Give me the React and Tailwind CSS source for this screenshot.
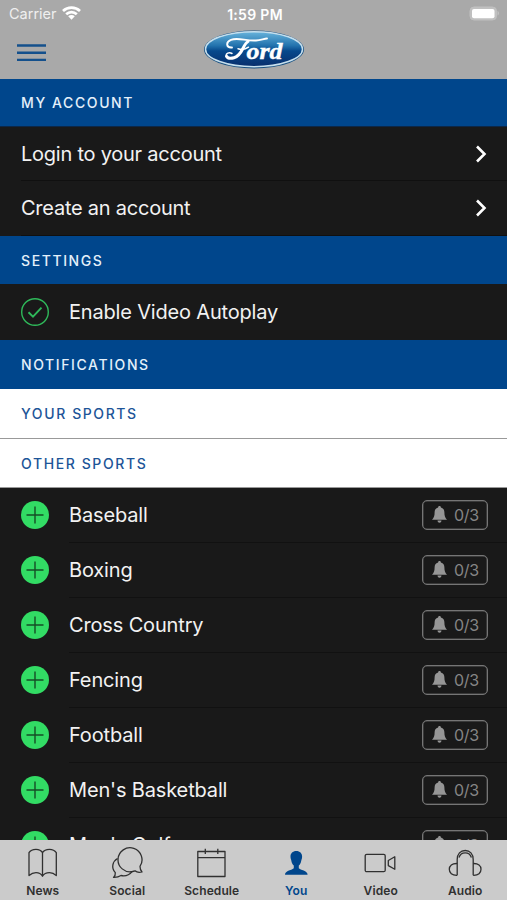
import React from 'react';

const sports = ['Baseball', 'Boxing', 'Cross Country', 'Fencing', 'Football', "Men's Basketball", "Men's Golf"];

const NewsIcon = () => (
    <path d="M17.500 5.600C16 3 13.500 2.300 11 2.300S5.600 3 4 5.600V28.600C6 26.800 8 25.600 11 25.600S16 26.600 17.500 29.200C19 26.600 21.500 25.600 24.500 25.600S29.500 26.800 31.300 28.600V5.600C29.500 3 27 2.300 24.500 2.300S19 3 17.500 5.600V29" />
);

const SocialIcon = () => (
    <>
        <path d="M22.500 24.500A12 12 0 1 1 30 19.400C30 21.500 30.700 23.500 32 25C29.300 25.800 26.500 25.200 25 23.800Z" />
        <path d="M7.500 11.500C2.500 14.500.900 20.500 5.300 25.700C5.500 27.500 4.800 29.200 3.500 30.400C6.500 30.600 9 29.800 11 28.500C15 29.300 19.500 27.800 22 24.600" />
    </>
);

const ScheduleIcon = () => (
    <path d="M3.800 4.500H31V29.500H3.800ZM3.800 10.700H31M11.300 1.800V7M23.800 1.800V7" />
);

const YouIcon = () => (
    <path stroke="none" fill="currentColor" d="M17.300 4C13.700 4 11.500 6.300 11.500 9.600C11.500 11.200 12 12.500 12.300 13.400C12.700 16 13.500 17.300 14.800 18.600V21.200C13.500 23 6 23.300 6 27.800H28.600C28.600 23.300 21.100 23 19.800 21.200V18.600C21.100 17.300 21.900 16 22.300 13.400C22.700 12.500 23.100 11.200 23.100 9.600C23.100 6.300 20.900 4 17.300 4Z" />
);

const VideoIcon = () => (
    <>
        <rect x="2.200" y="7.300" width="20" height="17.400" rx="1.500" />
        <path d="M25.300 13.500L31.800 9.800V22.300L25.300 18.600Z" />
    </>
);

const AudioIcon = () => (
    <>
        <path d="M9.200 28.300V12.500C9.200 7 12.500 3.500 17.200 3.500S25.200 7 25.200 12.500V28.300" />
        <path d="M11 10.500C12 7 14.200 5.800 17.200 5.800S22.400 7 23.400 10.500" />
        <path d="M9.200 16.500C4 16.300 1.300 18.700 1.300 22.300S4 28.500 9.200 28.300M25.200 16.500C30.400 16.300 33 18.700 33 22.300S30.400 28.500 25.200 28.300" />
    </>
);

const tabs = [
    { label: 'News', Icon: NewsIcon },
    { label: 'Social', Icon: SocialIcon },
    { label: 'Schedule', Icon: ScheduleIcon },
    { label: 'You', Icon: YouIcon, active: true },
    { label: 'Video', Icon: VideoIcon },
    { label: 'Audio', Icon: AudioIcon },
];

const FordLogo = () => (
    <svg className="mt-px ml-px" width="102" height="40" viewBox="0 0 102 40">
        <defs>
            <linearGradient id="oval" x1="0" y1="0" x2="0" y2="1">
                <stop offset="0" stopColor="#68b4dc" />
                <stop offset=".4" stopColor="#2272ad" />
                <stop offset=".55" stopColor="#07498c" />
                <stop offset="1" stopColor="#082e6c" />
            </linearGradient>
        </defs>
        <ellipse cx="51" cy="20.500" rx="50" ry="19" fill="#174f80" />
        <ellipse cx="51" cy="20.200" rx="48.500" ry="17.500" fill="url(#oval)" stroke="#c6dfed" strokeWidth="1.500" />
        <g fill="none" stroke="#fff" strokeLinecap="round">
            <path strokeWidth="1.900" d="M29 18.500C23 19 22.500 13 28 10.800C35 8 43 12.200 53 11.500C58 11.200 61 9.500 64 9.500" />
            <path strokeWidth="3" d="M45 12.500C40 15 39.500 26.500 31 28.800C27.500 29.700 24.500 29 23.500 27.200" />
            <path strokeWidth="1.500" d="M23.500 27.200C22.500 24.500 26 22.800 29 24.500M35 19.800C39 21 43 20 45.500 18.200" />
        </g>
        <text x="43.500" y="29.500" fill="#fff" stroke="#fff" strokeWidth=".4" textLength="36" lengthAdjust="spacingAndGlyphs" className="font-['Liberation_Serif',serif] text-[23px] font-bold italic">ord</text>
    </svg>
);

const StatusBar = () => (
    <div className="grid h-7 grid-cols-3 items-center pl-[9px] pr-[7px] text-white">
        <div className="flex items-center gap-[5px] text-[14.500px] text-[#efefef]">
            Carrier
            <svg className="-mt-0.5" width="19" height="14" viewBox="0 0 19 14" fill="none" stroke="#fff" strokeWidth="2.700">
                <path d="M1 5C5.800.5 13.200.5 18 5M4.200 8.300C7.200 5.400 11.800 5.400 14.800 8.300" />
                <path fill="#fff" stroke="none" d="M9.500 13.700L6.200 10.300C8 8.700 11 8.700 12.800 10.300Z" />
            </svg>
        </div>
        <div className="whitespace-nowrap pl-px text-center text-[14px] font-semibold tracking-[0.300px]">1:59 PM</div>
        <svg className="-mt-0.5 justify-self-end" width="31" height="15" viewBox="0 0 31 15">
            <rect x="1" y="1" width="26.500" height="13" rx="4" fill="#c0c0c0" stroke="#c0c0c0" strokeWidth="1" />
            <rect x="3" y="3" width="22.500" height="9.200" rx="2" fill="#fff" />
            <path d="M28.500 5V9.500C30.500 8.800 30.500 5.700 28.500 5Z" fill="#c0c0c0" />
        </svg>
    </div>
);

const SectionHeader = ({ title, className }) => (
    <h2 className={`flex shrink-0 items-center px-[21px] text-[14px] font-medium tracking-[1.600px] ${className}`}>{title}</h2>
);

const AccountRow = ({ label, className }) => (
    <div className={`flex shrink-0 pl-[21px] ${className}`}>
        <div className="flex flex-1 items-center justify-between border-b border-[#101010] pr-[20px]">
            <span className="text-[20px] tracking-[-0.240px]">{label}</span>
            <svg width="12" height="18" viewBox="0 0 12 18" fill="none" stroke="#fff" strokeWidth="2.600">
                <path d="M2 1.500L9.500 9L2 16.500" />
            </svg>
        </div>
    </div>
);

const SportRow = ({ name }) => (
    <div className="flex h-[55px] shrink-0 items-center pl-[21px]">
        <svg className="mb-px" width="28" height="28" viewBox="0 0 28 28">
            <circle cx="14" cy="14" r="14" fill="#32dc64" />
            <path d="M5.500 14H22.500M14 5.500V22.500" stroke="#164d26" strokeWidth="1.400" />
        </svg>
        <div className="ml-[20px] flex h-full flex-1 items-center justify-between border-b border-[#111] pr-[19px]">
            <span className="text-[20px] tracking-[-0.150px]">{name}</span>
            <div className="flex h-[30px] w-[66px] items-center gap-[7px] rounded-[5px] border border-[#757575] pl-[9px] text-[16px] tracking-[-0.300px] text-[#858585] ring-[0.500px] ring-[#5a5a5a] ring-inset">
                <svg className="-mt-0.5" width="15" height="17" viewBox="0 0 15 17" fill="#969696">
                    <path d="M7.500 0C8.500 0 8.900.7 8.900 1.500C11.400 2.200 12.400 4 12.400 6.500C12.400 10 13 11.500 15 13.800H0C2 11.500 2.600 10 2.600 6.500C2.600 4 3.600 2.200 6.100 1.500C6.100.7 6.500 0 7.500 0ZM5.500 14.600H9.500C9.300 17.500 5.700 17.500 5.500 14.600Z" />
                </svg>
                0/3
            </div>
        </div>
    </div>
);

const App = () => (
    <div className="flex h-[900px] w-[507px] flex-col overflow-hidden bg-[#191919] font-['Inter',sans-serif] text-[#f2f2f2]">
        <header className="h-[79px] shrink-0 bg-[#a9a9a9]">
            <StatusBar />
            <div className="grid grid-cols-[1fr_102px_1fr] items-start pl-[17px] pr-[18px]">
                <svg className="mt-4" width="29" height="18" viewBox="0 0 29 18" stroke="#14508c" strokeWidth="2.400">
                    <path d="M0 1.500H29M0 8.700H29M0 15.900H29" />
                </svg>
                <FordLogo />
            </div>
        </header>

        <main className="flex min-h-0 flex-1 flex-col overflow-hidden">
            <SectionHeader title="MY ACCOUNT" className="h-[48px] border-b border-[#0c2748] bg-[#00468c] text-[#e4f0fa]" />
            <AccountRow label="Login to your account" className="h-[54px]" />
            <AccountRow label="Create an account" className="h-[55px]" />
            <SectionHeader title="SETTINGS" className="h-[48px] bg-[#00468c] text-[#e4f0fa]" />
            <div className="flex h-[56px] shrink-0 items-center gap-[20px] pl-[21px]">
                <svg width="28" height="28" viewBox="0 0 28 28" fill="none" stroke="#2fb95a" strokeWidth="1.400">
                    <circle cx="14" cy="14" r="13.300" />
                    <path strokeWidth="1.900" d="M7.500 14.300L12 18.700L20.500 9.700" />
                </svg>
                <span className="text-[20px] tracking-[-0.180px]">Enable Video Autoplay</span>
            </div>
            <SectionHeader title="NOTIFICATIONS" className="h-[49px] bg-[#00468c] text-[#e4f0fa]" />
            <SectionHeader title="YOUR SPORTS" className="h-[50px] border-b border-[#999] bg-white text-[#1d5598]" />
            <SectionHeader title="OTHER SPORTS" className="h-[49px] border-b border-[#999] bg-white text-[#1d5598]" />
            {sports.map((name) => (
                <SportRow key={name} name={name} />
            ))}
        </main>

        <nav className="grid h-[60px] shrink-0 grid-cols-6 bg-[#cbcbcb]">
            {tabs.map(({ label, Icon, active }) => (
                <div key={label} className={`flex flex-col items-center pt-[7px] ${active ? 'text-[#00468c]' : 'text-[#303030]'}`}>
                    <svg width="34" height="32" viewBox="0 0 34 32" fill="none" stroke="currentColor" strokeWidth="1.300" strokeLinejoin="round">
                        <Icon />
                    </svg>
                    <span className="mt-[4px] pl-px text-[12px] font-semibold leading-[16px] tracking-[0.100px]">{label}</span>
                </div>
            ))}
        </nav>
    </div>
);

export default App;
